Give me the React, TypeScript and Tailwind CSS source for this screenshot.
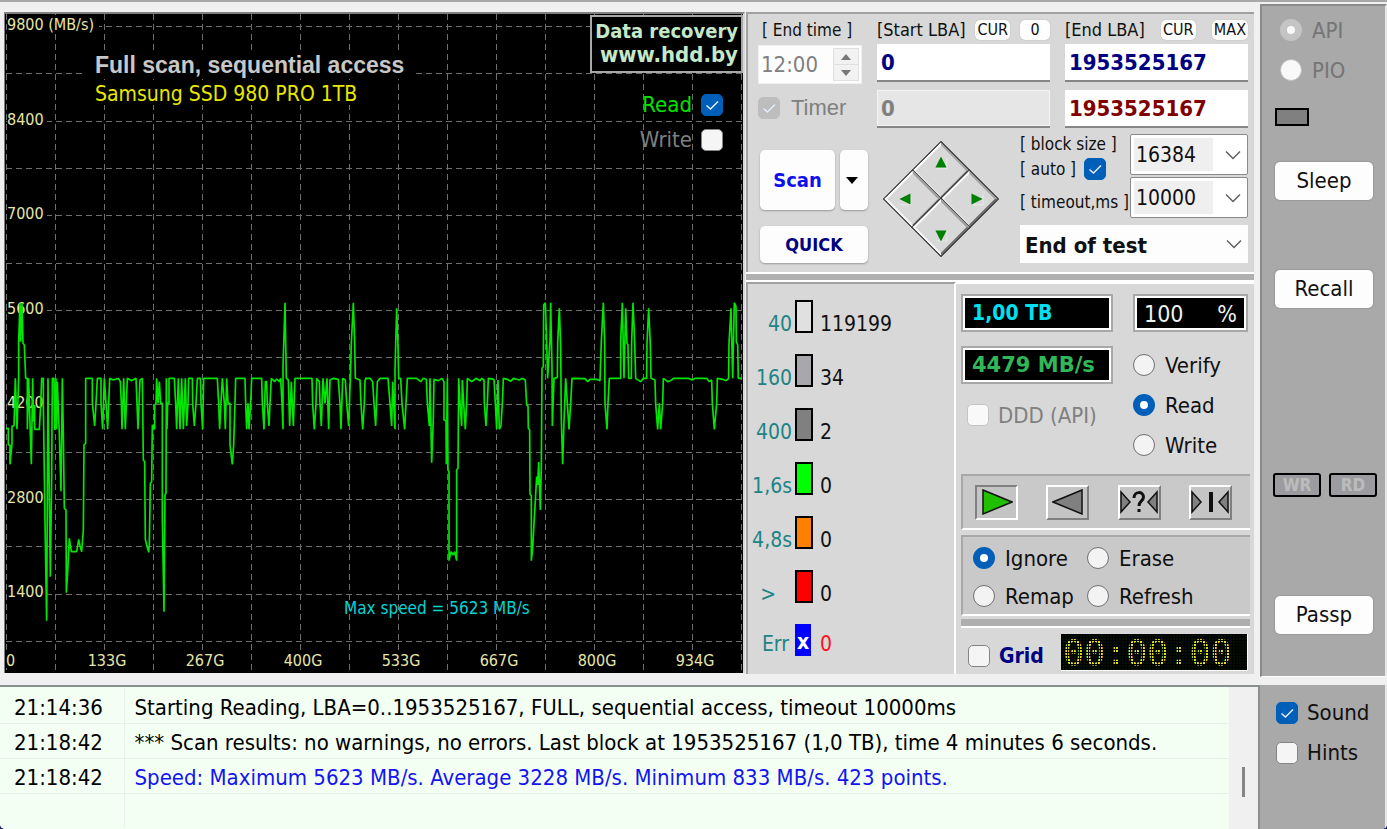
import { useId } from 'react'
import type { ReactNode } from 'react'
import clsx from 'clsx'

const trace = [
  '18,415 25,415 25,465 30,465 30,523 36,460 36,408 42,408 46,265 51,418 56,265 56,155 60,40 62,155 66,40 69,160 73,165 77,265 82,265 82,418 86,265 88,340 94,523 98,265 100,395 104,345 104,418 118,418 122,345 125,265 130,265 130,340 135,695 140,992 144,265 148,625 151,860 155,560 157,265 162,265 164,420 168,265 170,418 172,275 178,435 183,604 187,265 190,435 193,655 198,660 199,908 203,845 208,745 214,785 230,785 236,748 240,768 245,785 250,720 252,465 257,460 257,265 277,265 277,338 284,408 288,340 292,265 303,265 303,340 308,418 313,265 318,340 323,418 329,265 340,270 355,265 361,275 364,340 366,418 371,265 376,418 382,265 395,272 408,265 411,340 414,418 420,270 427,265 430,510 434,515 436,748 440,765 446,787 448,765 451,580 455,575 457,405 464,418 464,345 468,340 470,265 474,340 478,275 482,340 487,340 487,685 492,965 495,615 498,610 499,265 501,418 503,340 507,340 507,265 523,265 527,340 530,418 535,265 540,418 545,265 550,418 556,265 560,408 564,340 566,265 577,265 578,340 583,408 588,340 592,265 601,265 603,340 608,418 611,265 652,265 656,340 659,418 663,340 667,265 673,340 676,418 680,265 684,340 690,340 690,465 697,523 701,465 705,340 707,265 735,265 737,340 740,418 744,340 747,418 752,340 755,265 785,265 787,340 792,418 796,275 800,275 802,340 807,408 810,340 814,265 824,275 830,267 838,275 842,265 846,340 849,418 849,230 855,38 857,155 859,265 865,270 869,408 874,275 880,408 885,265 936,265 938,340 943,418 948,340 950,265 958,275 960,340 964,408 969,265 975,340 981,265 986,418 990,270 1000,265 1015,268 1020,340 1023,418 1028,265 1036,270 1040,340 1046,408 1051,265 1054,160 1060,38 1064,155 1066,265 1080,270 1083,340 1088,418 1093,340 1095,270 1100,265',
  '-15,265 0,265 8,275 12,340 17,408 22,275 30,265 54,265 60,340 65,408 68,275 75,418 75,240 80,55 84,170 86,265 92,265 96,340 104,418 108,340 112,265 140,265 152,275 160,265 169,268 172,340 178,408 180,265 185,518 190,385 192,268 205,272 216,265 222,275 222,390 228,392 229,523 232,265 234,540 237,545 237,812 243,785 250,795 254,785 260,812 260,540 264,535 266,265 270,340 275,408 277,270 281,340 286,418 290,340 292,265 305,275 312,270 318,265 330,272 335,265 342,270 343,340 348,408 352,340 355,265 372,268 376,340 380,418 384,270 388,418 393,408 397,340 400,265 412,268 422,274 430,265 448,270 456,265 466,270 470,345 474,348 475,415 479,420 480,612 484,617 484,812 488,775 492,700 496,632 500,560 503,585 506,516 511,660 514,527 516,235 520,230 521,45 526,38 530,155 533,265 540,150 542,38 546,230 547,408 552,265 562,262 563,160 568,55 572,165 574,390 578,523 582,395 587,265 592,340 597,418 602,340 606,265 645,266 653,275 660,268 680,268 690,272 694,155 700,38 704,155 705,340 711,418 714,340 718,265 752,265 752,155 757,38 762,265 767,55 771,160 774,165 776,265 784,265 785,155 789,38 794,155 797,265 812,275 820,265 830,265 831,160 836,55 841,165 843,265 855,270 857,340 863,418 868,340 872,418 878,340 880,265 893,275 905,270 910,265 955,265 966,270 975,265 1010,265 1018,275 1025,270 1027,340 1033,418 1040,340 1042,265 1058,268 1068,272 1076,265 1077,160 1083,55 1088,265 1093,38 1098,50 1099,155 1103,165 1105,265 1116,265',
]

const speedTicks = ['9800 (MB/s)', '8400', '7000', '5600', '4200', '2800', '1400']
const sizeTicks = ['133G', '267G', '400G', '533G', '667G', '800G', '934G']

const blockTimes = [
  { label: '40', value: '119199', color: 'bg-[#e0e0e0]' },
  { label: '160', value: '34', color: 'bg-[#a8a8ac]' },
  { label: '400', value: '2', color: 'bg-[#808080]' },
  { label: '1,6s', value: '0', color: 'bg-[#00ff00]' },
  { label: '4,8s', value: '0', color: 'bg-[#ff8000]' },
  { label: '>', value: '0', color: 'bg-[#ff0000]' },
]

const seekButtons = [
  { direction: 'up', place: 'items-start justify-start', path: 'M7 0 13 12H1z' },
  { direction: 'right', place: 'items-start justify-end', path: 'M1 1 13 7 1 13z' },
  { direction: 'left', place: 'items-end justify-start', path: 'M13 1 1 7 13 13z' },
  { direction: 'down', place: 'items-end justify-end', path: 'M1 2H13L7 14z' },
]

const log = [
  { time: '21:14:36', text: 'Starting Reading, LBA=0..1953525167, FULL, sequential access, timeout 10000ms', color: 'text-black' },
  { time: '21:18:42', text: '*** Scan results: no warnings, no errors. Last block at 1953525167 (1,0 TB), time 4 minutes 6 seconds.', color: 'text-black' },
  { time: '21:18:42', text: 'Speed: Maximum 5623 MB/s. Average 3228 MB/s. Minimum 833 MB/s. 423 points.', color: 'text-[#1414f0]' },
]

function CheckBox({ id, checked, disabled }: { id: string; checked?: boolean; disabled?: boolean }) {
  return (
    <span className="relative block size-[22px] shrink-0">
      <input
        id={id}
        type="checkbox"
        defaultChecked={checked}
        disabled={disabled}
        className="peer block size-[22px] appearance-none rounded-[5px] border border-[#858585] bg-[#f5f5f5] checked:border-[#005fb8] checked:bg-[#005fb8] disabled:border-[#c4c4c4] disabled:bg-[#f9f9f9] disabled:checked:border-[#bdbdbd] disabled:checked:bg-[#bdbdbd]"
      />
      <svg viewBox="0 0 22 22" className="pointer-events-none absolute inset-0 hidden peer-checked:block" fill="none" stroke="#e4eefa" strokeWidth="1.5">
        <path d="M5.5 11.5 9.5 15 17 7.5" />
      </svg>
    </span>
  )
}

function Radio({ name, label, checked, disabled }: { name: string; label: string; checked?: boolean; disabled?: boolean }) {
  return (
    <label className={clsx('flex h-6 items-center gap-[10px] leading-6', disabled && 'text-[#757575]')}>
      <input
        type="radio"
        name={name}
        defaultChecked={checked}
        disabled={disabled}
        className="size-[22px] shrink-0 appearance-none rounded-full border border-[#707070] bg-[#f3f3f3] checked:border-[7px] checked:border-[#005fb8] checked:bg-white disabled:border-[#c0c0c0] disabled:bg-[#f9f9f9] disabled:checked:border-[#c4c4c4]"
      />
      <span className="pt-[2px]">{label}</span>
    </label>
  )
}

function DropDown({ label, value, options }: { label: string; value: string; options: string[] }) {
  return (
    <div className="relative h-[41px] w-[118px] rounded-[2px] border border-[#8a8a8a] bg-white p-[3px]">
      <select
        aria-label={label}
        defaultValue={value}
        className="block h-full w-full appearance-none bg-linear-to-r from-[#efefef] from-72% to-white to-72% pl-[2px] text-[21px] leading-6"
      >
        {options.map((option) => (
          <option key={option}>{option}</option>
        ))}
      </select>
      <Chevron />
    </div>
  )
}

function Chevron() {
  return (
    <svg viewBox="0 0 16 10" className="pointer-events-none absolute top-1/2 right-[6px] h-[10px] w-4 -translate-y-1/2" fill="none" stroke="#606060" strokeWidth="1.5">
      <path d="M1 1.5 8 8.5 15 1.5" />
    </svg>
  )
}

function MiniButton({ children }: { children: ReactNode }) {
  return (
    <button type="button" className="h-5 min-w-[30px] rounded-[5px] bg-[#fdfdfd] px-[2px] text-[16px] leading-5 shadow-[0_0_1px_#999]">
      {children}
    </button>
  )
}

function SideButton({ children }: { children: ReactNode }) {
  return (
    <button type="button" className="h-[38px] w-[98px] rounded-[5px] bg-[#fdfdfd] leading-6 shadow-[0_0_2px_#777]">
      {children}
    </button>
  )
}

function Chart() {
  const readId = useId()
  const writeId = useId()
  const columns = Array.from({ length: 16 }, (_, i) => 6.5 + i * 49)
  const rows = Array.from({ length: 14 }, (_, i) => 26.5 + Math.round(i * 47.3))

  return (
    <section className="relative mr-[1px] min-w-0 flex-1 self-start border-t-2 border-r-2 border-l border-[#808080] border-r-[#d8d8d8] bg-black">
      <svg viewBox="5 14 738 659" className="block w-full font-['DejaVu_Sans_Condensed','DejaVu_Sans',sans-serif]">
        <g stroke="#6e6e6e" strokeWidth="1" strokeDasharray="6 4" shapeRendering="crispEdges">
          {columns.map((x) => (
            <path key={x} d={`M${x} 14V673`} />
          ))}
          {rows.map((y) => (
            <path key={y} d={`M6 ${y}H743`} />
          ))}
        </g>
        <g fill="#e6e6a8" fontSize="16">
          {speedTicks.map((tick, i) => (
            <g key={tick}>
              <rect x="7" y={15 + Math.round(i * 94.6)} width={i === 0 ? 92 : 40} height="16" fill="#000" />
              <text x="7" y={30 + Math.round(i * 94.5)}>{tick}</text>
            </g>
          ))}
          <rect x="5" y="652" width="12" height="16" fill="#000" />
          <text x="6" y="666">0</text>
          {sizeTicks.map((tick, i) => (
            <g key={tick}>
              <rect x={87 + i * 98} y="650" width="42" height="19" fill="#000" />
              <text x={107 + i * 98} y="666" textAnchor="middle">{tick}</text>
            </g>
          ))}
        </g>
        <rect x="86" y="52" width="328" height="27" fill="#000" />
        <rect x="86" y="81" width="284" height="24" fill="#000" />
        <text x="95" y="73" fill="#c8c8c8" fontSize="23" fontWeight="700" className="font-['Liberation_Sans',Arial,sans-serif]">
          Full scan, sequential access
        </text>
        <text x="95" y="101" fill="#e8e800" fontSize="21">Samsung SSD 980 PRO 1TB</text>
        <g fill="none" stroke="#00e800" strokeWidth="5" strokeLinejoin="bevel">
          <polyline points={trace[0]} transform="translate(0 290) scale(0.33333)" />
          <polyline points={trace[1]} transform="translate(370 290) scale(0.33333)" />
        </g>
        <text x="344" y="614" fill="#00d4d4" fontSize="17">Max speed = 5623 MB/s</text>
      </svg>

      <a
        href="#data-recovery"
        className="absolute top-[1px] right-0 border-2 border-[#a8a8a8] bg-black px-[3px] pt-[2px] pb-1 text-right text-[20px] leading-6 font-bold text-[#c4e8c8]"
      >
        <span className="block">Data recovery</span>
        <span className="block text-[22px]">www.hdd.by</span>
      </a>
      <div className="absolute top-20 right-5 flex flex-col items-end gap-[13px] leading-[22px]">
        <div className="flex items-center gap-[9px]">
          <label htmlFor={readId} className="text-[#00e400]">Read</label>
          <CheckBox id={readId} checked />
        </div>
        <div className="flex items-center gap-[9px]">
          <label htmlFor={writeId} className="text-[#808080]">Write</label>
          <CheckBox id={writeId} />
        </div>
      </div>
    </section>
  )
}

function ScanSetup() {
  const timerId = useId()
  const autoId = useId()
  const field = 'block h-[38px] w-full border-b-2 border-[#868686] px-1 text-[22px] font-bold leading-7'

  return (
    <section className="flex h-[260px] flex-col border-t-2 border-l-2 border-[#a0a0a0] bg-[#d8d8d8] pt-[6px] pr-[6px] pl-[10px]">
      <div className="grid grid-cols-[104px_173px_1fr] gap-x-[15px]">
        <div>
          <label htmlFor="end-time" className="block h-[25px] pl-1 text-[17px] leading-5">[ End time ]</label>
          <div className="flex h-[39px] border border-[#f0f0f0] bg-[#fdfdfd] p-[2px]">
            <input id="end-time" defaultValue="12:00" disabled className="w-0 flex-1 text-[#808080]" />
            <div className="grid w-[26px] gap-[1px] border border-[#e0e0e0] bg-[#e0e0e0]">
              <button type="button" disabled aria-label="Later" className="grid place-items-center bg-[#f2f2f2]">
                <svg viewBox="0 0 10 6" className="w-[10px]"><path d="M0 6 5 0 10 6z" fill="#777" /></svg>
              </button>
              <button type="button" disabled aria-label="Earlier" className="grid place-items-center bg-[#f2f2f2]">
                <svg viewBox="0 0 10 6" className="w-[10px]"><path d="M0 0 5 6 10 0z" fill="#777" /></svg>
              </button>
            </div>
          </div>
          <div className="mt-3 flex items-center gap-[11px]">
            <CheckBox id={timerId} checked disabled />
            <label htmlFor={timerId} className="font-['Liberation_Sans',Arial,sans-serif] leading-6 text-[#808080]">Timer</label>
          </div>
        </div>

        <div>
          <div className="flex h-6 items-start justify-between text-[18px] leading-5">
            <label htmlFor="start-lba">[Start LBA]</label>
            <MiniButton>CUR</MiniButton>
            <MiniButton>0</MiniButton>
          </div>
          <input id="start-lba" defaultValue="0" className={clsx(field, 'bg-white text-[#000080]')} />
          <input aria-label="Current start LBA" defaultValue="0" disabled className={clsx(field, 'mt-2 bg-[#e6e6e6] text-[#808080] shadow-[inset_0_0_0_1px_#f4f4f4]')} />
        </div>

        <div>
          <div className="flex h-6 items-start justify-between text-[18px] leading-5">
            <label htmlFor="end-lba">[End LBA]</label>
            <MiniButton>CUR</MiniButton>
            <MiniButton>MAX</MiniButton>
          </div>
          <input id="end-lba" defaultValue="1953525167" className={clsx(field, 'bg-white text-[#000080]')} />
          <input aria-label="Current end LBA" defaultValue="1953525167" className={clsx(field, 'mt-2 bg-white text-[#800000]')} />
        </div>
      </div>

      <div className="mt-[6px] flex">
        <div className="mt-4 ml-[2px] grid h-[113px] w-[108px] grid-cols-[75px_28px] grid-rows-[60px_37px] gap-x-[5px] gap-y-4">
          <button type="button" className="rounded-[5px] bg-[#fdfdfd] text-[20px] font-bold text-[#1010ee] shadow-[0_1px_2px_#999]">Scan</button>
          <button type="button" aria-label="Scan options" className="grid place-items-center rounded-[5px] bg-[#fdfdfd] pr-1 shadow-[0_1px_2px_#999]">
            <svg viewBox="0 0 12 7" className="w-3"><path d="M0 0H12L6 7z" /></svg>
          </button>
          <button type="button" className="col-span-2 rounded-[5px] bg-[#fdfdfd] text-[18px] font-bold text-[#000080] shadow-[0_1px_2px_#999]">QUICK</button>
        </div>

        <div className="mt-6 ml-8 grid size-[82px] rotate-45 grid-cols-2 border border-[#222] bg-[#d8d8d8]">
          {seekButtons.map((button) => (
            <button
              key={button.direction}
              type="button"
              aria-label={`Seek ${button.direction}`}
              className={clsx('flex border-2 border-t-[#a0a0a0] border-r-[#686868] border-b-[#f6f6f6] border-l-white p-[6px] shadow-[0_0_0_1px_#333]', button.place)}
            >
              <svg viewBox="0 0 14 14" className="size-[13px] -rotate-45" fill="#008000">
                <path d="M2 13.5H13.5V2" fill="none" stroke="#f4f4f4" strokeWidth="1" />
                <path d={button.path} />
              </svg>
            </button>
          ))}
        </div>

        <div className="ml-auto w-[228px]">
          <div className="flex justify-between">
            <div className="text-[17px] leading-5 whitespace-nowrap">
              <div>[ block size ]</div>
              <div className="flex h-[30px] items-center gap-2">
                <label htmlFor={autoId}>[ auto ]</label>
                <CheckBox id={autoId} checked />
              </div>
              <div className="mt-2">[ timeout,ms ]</div>
            </div>
            <div className="flex flex-col gap-[2px]">
              <DropDown label="Block size" value="16384" options={['256', '4096', '16384']} />
              <DropDown label="Timeout, ms" value="10000" options={['1000', '5000', '10000']} />
            </div>
          </div>
          <div className="relative mt-[7px] bg-[#fdfdfd]">
            <select aria-label="When finished" className="block h-[38px] w-full appearance-none pt-[3px] pl-[5px] leading-7 font-bold">
              <option>End of test</option>
              <option>Loop test</option>
              <option>Shutdown PC</option>
            </select>
            <Chevron />
          </div>
        </div>
      </div>
    </section>
  )
}

function BlockTimes() {
  return (
    <ul className="w-[210px] shrink-0 border-t-2 border-r-2 border-l-2 border-[#a0a0a0] border-r-white bg-[#d8d8d8] pt-4 text-[21px]">
      {blockTimes.map((row) => (
        <li key={row.label} className="flex h-[54px] items-start">
          <span className={clsx('mt-3 w-[44px] text-right leading-6 text-[#208484]', row.label === '>' && 'pr-4')}>{row.label}</span>
          <span className={clsx('ml-[3px] h-[33px] w-[18px] border-2 border-black', row.color)} />
          <span className="mt-3 ml-[7px] leading-6">{row.value}</span>
        </li>
      ))}
      <li className="flex items-start">
        <span className="mt-2 w-[41px] text-right leading-6 text-[#208484]">Err</span>
        <span className="ml-[6px] h-8 w-4 bg-[#0000ff] pt-1 text-center leading-7 font-bold text-white">x</span>
        <span className="mt-2 ml-[9px] leading-6 text-[#ff1020]">0</span>
      </li>
    </ul>
  )
}

function Display({ className, children }: { className: string; children: ReactNode }) {
  return (
    <div className="h-[38px] border-2 border-[#a8a8a8] bg-white p-[2px]">
      <div className={clsx('h-full bg-black px-[7px]', className)}>{children}</div>
    </div>
  )
}

function ModePanel() {
  const dddId = useId()
  const gridId = useId()
  const media = 'grid h-[35px] w-[43px] place-items-center border-2'
  const raised = 'border-white border-r-[#808080] border-b-[#808080] bg-[#c4c4c4]'

  return (
    <div className="min-w-0 flex-1 border-t-2 border-white bg-[#d8d8d8] pt-[10px] pr-1 pl-[5px]">
      <div className="flex justify-between pr-[2px]">
        <div className="flex w-[152px] flex-col gap-[14px]">
          <Display className="text-[21px] leading-[30px] font-bold text-[#00e0f0]">1,00 TB</Display>
          <Display className="font-['DejaVu_Sans',Verdana,sans-serif] text-[21px] leading-[30px] font-bold text-[#30b858]">4479 MB/s</Display>
          <div className="ml-[6px] flex items-center gap-[9px] pt-1">
            <CheckBox id={dddId} disabled />
            <label htmlFor={dddId} className="pt-[2px] leading-6 whitespace-nowrap text-[#808080]">DDD (API)</label>
          </div>
        </div>
        <div className="w-[115px]">
          <Display className="flex justify-between text-[23px] leading-[33px] text-[#f0f0f0]">
            <span>100</span>
            <span>%</span>
          </Display>
          <div className="mt-[21px] flex flex-col gap-4">
            <Radio name="mode" label="Verify" />
            <Radio name="mode" label="Read" checked />
            <Radio name="mode" label="Write" />
          </div>
        </div>
      </div>

      <div className="mt-[17px] flex h-[56px] items-center justify-between border-t-2 border-b-2 border-l-2 border-[#a8a8a8] border-b-white bg-[#c9c9c9] pr-[18px] pl-3">
        <button type="button" aria-label="Start" className={clsx(media, 'border-[#808080] border-r-white border-b-white bg-[#c4c4c4]')}>
          <svg viewBox="0 0 32 26" className="h-[26px] w-8"><path d="M2 1 31 13 2 25z" fill="#20c000" stroke="#111" strokeWidth="1.5" /></svg>
        </button>
        <button type="button" aria-label="Reverse" className={clsx(media, raised)}>
          <svg viewBox="0 0 32 26" className="h-[26px] w-8"><path d="M30 1 1 13 30 25z" fill="#808080" stroke="#111" strokeWidth="1.5" /></svg>
        </button>
        <button type="button" aria-label="Random" className={clsx(media, raised)}>
          <svg viewBox="0 0 38 26" className="h-[26px] w-[38px]" fill="#808080" stroke="#111" strokeWidth="1.5">
            <path d="M1 3 10 13 1 23zM37 3 28 13 37 23z" />
            <path d="M14 9C14 2 23.5 2 23.5 8 23.5 12 19 12 19 17M19 20V23" fill="none" strokeWidth="3" />
          </svg>
        </button>
        <button type="button" aria-label="Butterfly" className={clsx(media, raised)}>
          <svg viewBox="0 0 38 26" className="h-[26px] w-[38px]" fill="#808080" stroke="#111" strokeWidth="1.5">
            <path d="M1 3 10 13 1 23zM37 3 28 13 37 23z" />
            <path d="M20 3V23" strokeWidth="4" />
          </svg>
        </button>
      </div>

      <div className="mt-[5px] grid h-[81px] grid-cols-[114px_1fr] content-center gap-y-[14px] border-t-2 border-b-2 border-l-2 border-[#a8a8a8] border-b-white bg-[#c9c9c9] pt-[2px] pl-[10px]">
        <Radio name="action" label="Ignore" checked />
        <Radio name="action" label="Erase" />
        <Radio name="action" label="Remap" />
        <Radio name="action" label="Refresh" />
      </div>

      <div className="mt-[3px] h-[9px] border-b-2 border-white bg-[#aeaeae]" />

      <div className="mt-[6px] flex items-center justify-between pr-[2px] pl-[7px]">
        <div className="flex items-center gap-[9px] pt-[6px]">
          <CheckBox id={gridId} />
          <label htmlFor={gridId} className="text-[21px] leading-6 font-bold text-[#000080]">Grid</label>
        </div>
        <div className="relative h-[37px] w-[187px] border-r border-b border-white bg-[#041004] pl-[2px] font-['DejaVu_Sans_Mono',monospace] text-[35px] leading-[39px] text-[#e8e020]">
          00:00:00
          <div className="absolute inset-0 bg-[linear-gradient(#000_1px,transparent_1px),linear-gradient(90deg,#000_1px,transparent_1px)] bg-[size:3px_3px]" />
        </div>
      </div>
    </div>
  )
}

function SideBar() {
  return (
    <aside className="mt-[2px] flex h-[673px] w-[127px] shrink-0 flex-col border-t-2 border-r-2 border-b border-l-2 border-[#8a8a8a] border-r-[#e8e8e8] border-b-white bg-[#a9a9a9] pl-[13px]">
      <div className="mt-3 ml-[5px] flex flex-col gap-4">
        <Radio name="access" label="API" checked disabled />
        <Radio name="access" label="PIO" disabled />
      </div>
      <div className="mt-[26px] h-[18px] w-[34px] shrink-0 border-2 border-black bg-[#808080]" />
      <div className="mt-9"><SideButton>Sleep</SideButton></div>
      <div className="mt-[70px]"><SideButton>Recall</SideButton></div>
      <div className="mt-[165px] flex gap-2 text-[17px] leading-5 font-bold text-[#bcbcbc]">
        <span className="-ml-[2px] w-[48px] shrink-0 rounded-[3px] border-2 border-black bg-[#9c9ca0] text-center">WR</span>
        <span className="w-[48px] shrink-0 rounded-[3px] border-2 border-black bg-[#9c9ca0] text-center">RD</span>
      </div>
      <div className="mt-[99px]"><SideButton>Passp</SideButton></div>
    </aside>
  )
}

export default function App() {
  const soundId = useId()
  const hintsId = useId()

  return (
    <div className="min-h-screen bg-[#1c2460] font-['DejaVu_Sans_Condensed','DejaVu_Sans',sans-serif] text-[22px] text-[#101010]">
      <div className="flex min-h-screen flex-col overflow-hidden rounded-b-[5px] border-t-2 border-[#a8a8a8] bg-[#f0f0f0]">
        <main className="flex">
          <div className="flex min-w-0 flex-1 pt-[10px] pr-[6px] pb-[3px] pl-1">
            <Chart />
            <div className="flex w-[508px] shrink-0 flex-col">
              <ScanSetup />
              <div className="h-[10px] border-t-2 border-b-2 border-white bg-[#b0b0b0]" />
              <div className="flex flex-1">
                <BlockTimes />
                <ModePanel />
              </div>
            </div>
          </div>
          <SideBar />
        </main>

        <div className="mt-2 flex flex-1">
          <div className="flex min-w-0 flex-1 border-t-2 border-r-2 border-[#8a9090] bg-[#f3fff3]">
            <table className="mt-[1px] flex-1 self-start border-collapse leading-6">
              <tbody>
                {log.map((entry, i) => (
                  <tr key={i} className="h-[35px] border-b border-[#e8f0e8]">
                    <td className="w-[124px] border-r border-[#e8f0e8] pt-[5px] pl-[14px] text-black">{entry.time}</td>
                    <td className={clsx('pt-[5px] pl-[10px] whitespace-nowrap', entry.color)}>{entry.text}</td>
                  </tr>
                ))}
                <tr className="h-[35px]">
                  <td className="border-r border-[#e8f0e8]" />
                  <td />
                </tr>
              </tbody>
            </table>
            <div className="flex w-[29px] shrink-0 justify-center bg-[#f0f0f0]">
              <div className="mt-20 h-[30px] w-[3px] bg-[#858585]" />
            </div>
          </div>
          <div className="flex w-[127px] shrink-0 flex-col gap-[18px] border-r-2 border-[#e8e8e8] bg-[#a9a9a9] pt-[17px] pl-4">
            <div className="flex items-center gap-[9px]">
              <CheckBox id={soundId} checked />
              <label htmlFor={soundId} className="leading-[22px]">Sound</label>
            </div>
            <div className="flex items-center gap-[9px]">
              <CheckBox id={hintsId} />
              <label htmlFor={hintsId} className="leading-[22px]">Hints</label>
            </div>
          </div>
        </div>
      </div>
    </div>
  )
}
